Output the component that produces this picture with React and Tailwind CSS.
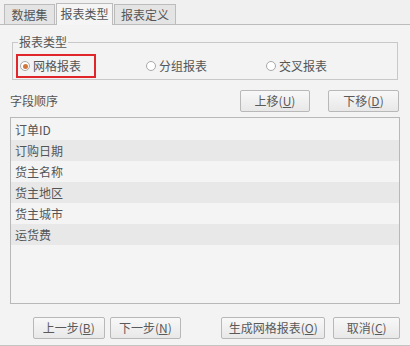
const font = { fontFamily: '"Noto Sans CJK SC", "Liberation Sans", sans-serif' };

const fields = ['订单ID', '订购日期', '货主名称', '货主地区', '货主城市', '运货费'];

function Tab({ label, active, w }) {
  return (
    <div
      className={`${w} text-center text-[12px] leading-[20px] border border-b-0 border-[#bcbcbc] ${
        active ? 'bg-[#f5f5f5] h-[22px] -mb-px relative z-10' : 'bg-[#e4e4e4] h-[20px]'
      }`}
    >
      {label}
    </div>
  );
}

function Radio({ label, checked }) {
  return (
    <div className="flex items-center gap-[3px]">
      <span className="w-[10px] h-[10px] rounded-full border border-[#a8a8a8] bg-white flex items-center justify-center">
        {checked && <span className="w-[5px] h-[5px] rounded-full bg-[#d4763a]" />}
      </span>
      <span>{label}</span>
    </div>
  );
}

function Btn({ children, className = '' }) {
  return (
    <button
      className={`h-[22px] border border-[#b8b8b8] rounded-[2px] bg-gradient-to-b from-[#f8f8f8] to-[#e8e8e8] text-[12px] text-[#5a5a5a] ${className}`}
    >
      {children}
    </button>
  );
}

export default function App() {
  return (
    <div
      className="w-[410px] h-[346px] bg-[#f3f3f3] text-[#555] overflow-hidden border-b border-[#c4c4c4]"
      style={font}
    >
      {/* tabs */}
      <div className="flex items-end gap-[1px] pl-[4px] pt-[3px] h-[25px] border-b border-[#bcbcbc] bg-[#f0f0f0]">
        <Tab label="数据集" w="w-[51px]" />
        <Tab label="报表类型" w="w-[57px]" active />
        <Tab label="报表定义" w="w-[62px]" />
      </div>

      <div className="px-[10px]">
        {/* group box */}
        <div className="relative mt-[17px] ml-[2px] mr-[2px] h-[38px] border border-[#c8c8c8] text-[12px]">
          <span className="absolute -top-[9px] left-[5px] px-[1px] bg-[#f3f3f3] leading-[16px]">报表类型</span>
          <div className="flex items-end h-full pb-[1px]">
            <div className="ml-[3px] w-[80px] h-[24px] border-2 border-[#e0262a] flex items-center pl-[2px]">
              <Radio label="网格报表" checked />
            </div>
            <div className="ml-[50px] h-[24px] flex items-center">
              <Radio label="分组报表" />
            </div>
            <div className="ml-[59px] h-[24px] flex items-center">
              <Radio label="交叉报表" />
            </div>
          </div>
        </div>

        {/* field order */}
        <div className="flex items-center mt-[10px] h-[22px]">
          <span className="text-[12px]">字段顺序</span>
          <Btn className="ml-auto w-[70px]">
            上移(<u>U</u>)
          </Btn>
          <Btn className="ml-[18px] mr-[1px] w-[71px]">
            下移(<u>D</u>)
          </Btn>
        </div>

        <div className="mt-[5px] h-[187px] border border-[#b8b8b8] bg-[#f4f4f4] pt-[1px] text-[12px]">
          {fields.map((f, i) => (
            <div
              key={f}
              className={`h-[21px] leading-[21px] pl-[4px] ${i % 2 === 1 ? 'bg-[#e8e8e8]' : 'bg-[#f4f4f4]'}`}
            >
              {f}
            </div>
          ))}
        </div>

        {/* bottom buttons */}
        <div className="flex items-center mt-[13px]">
          <Btn className="ml-[23px] w-[72px]">
            上一步(<u>B</u>)
          </Btn>
          <Btn className="ml-[5px] w-[72px]">
            下一步(<u>N</u>)
          </Btn>
          <Btn className="ml-[40px] w-[105px] border-[#9aa6b4]">
            生成网格报表(<u>O</u>)
          </Btn>
          <Btn className="ml-[8px] w-[67px]">
            取消(<u>C</u>)
          </Btn>
        </div>
      </div>
    </div>
  );
}
